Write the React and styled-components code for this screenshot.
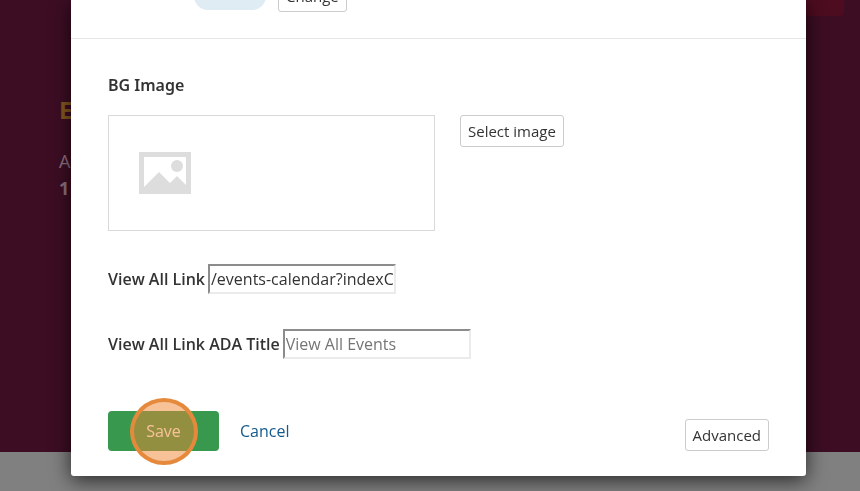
import React from 'react';
import styled, { createGlobalStyle } from 'styled-components';

const GlobalStyle = createGlobalStyle`
    * {
        box-sizing: border-box;
    }

    body {
        margin: 0;
        font-family: 'Open Sans', 'Noto Sans', sans-serif;
        font-size: 16px;
        line-height: 24px;
        color: #333;
    }

    button, input {
        font: inherit;
    }
`;

const Page = styled.div`
    display: flex;
    flex-direction: column;
    height: 100vh;
    overflow: hidden;
    background: #808080;
`;

const Hero = styled.section`
    position: relative;
    flex: 1;
    margin-bottom: 39px;
    padding: 96px 59px 0;
    background: #3d0d24;
    color: #8f7483;
`;

const HeroBadge = styled.div`
    position: absolute;
    top: 0;
    right: 16px;
    width: 120px;
    height: 16px;
    border-radius: 0 0 4px 4px;
    background: #4d0c1f;
`;

const HeroTitle = styled.h2`
    margin: 0 0 24px;
    font-size: 24px;
    line-height: 28px;
    color: #85591f;
`;

const HeroText = styled.p`
    margin: 0;
    font-size: 18px;
    line-height: 27px;
    font-weight: ${props => props.$bold ? 700 : 400};
`;

const Overlay = styled.div`
    position: fixed;
    inset: 0;
    padding: 0 54px 15px 71px;
`;

const Dialog = styled.form`
    background: #fff;
    border-radius: 0 0 3px 3px;
    box-shadow: 0 4px 20px rgba(0, 0, 0, 0.7);
`;

const DialogHeader = styled.header`
    display: flex;
    align-items: flex-end;
    height: 39px;
    padding: 0 36px 26px 123px;
    border-bottom: 1px solid #e6e6e6;
`;

const ChipRow = styled.div`
    display: flex;
    align-items: center;
    gap: 12px;
`;

const Chip = styled.span`
    width: 72px;
    height: 28px;
    border-radius: 14px;
    background: #dfecf4;
`;

const DialogBody = styled.div`
    padding: 34px 37px 0;
`;

const SectionTitle = styled.h3`
    margin: 0 0 18px;
    font-family: 'Noto Sans', sans-serif;
    font-size: 16px;
    font-weight: 600;
`;

const ImageRow = styled.div`
    display: flex;
    align-items: flex-start;
    gap: 25px;
    margin-bottom: 33px;
`;

const ImageBox = styled.div`
    display: flex;
    align-items: center;
    width: 327px;
    height: 116px;
    padding-left: 30px;
    border: 1px solid #d9d9d9;
`;

const OutlineButton = styled.button`
    height: 32px;
    padding: 0 7px;
    border: 1px solid #ccc;
    border-radius: 3px;
    background: #fff;
    color: #333;
    font-size: 15px;
`;

const Field = styled.div`
    display: flex;
    align-items: center;
    gap: 3px;
    margin-bottom: 35px;
`;

const Label = styled.label`
    font-weight: 600;
`;

const TextInput = styled.input`
    width: 188px;
    height: 30px;
    padding: 1px;
    border: 2px solid;
    border-color: #8c8c8c #ebebeb #ebebeb #8c8c8c;
    background: #fff;
    color: #333;

    &::placeholder {
        color: #757575;
        opacity: 1;
    }
`;

const DialogFooter = styled.footer`
    display: flex;
    align-items: center;
    padding: 17px 37px 25px;
`;

const SaveSlot = styled.div`
    position: relative;
`;

const SaveButton = styled.button`
    display: block;
    width: 111px;
    height: 40px;
    padding: 0;
    border: 0;
    border-radius: 4px;
    background: #37984e;
    color: #fff;
`;

const ClickMarker = styled.span`
    position: absolute;
    top: -13px;
    left: 22px;
    width: 68px;
    height: 67px;
    border: 4px solid #e58a3c;
    border-radius: 50%;
    background: rgba(240, 134, 50, 0.5);
    pointer-events: none;
`;

const CancelLink = styled.a`
    margin-left: 21px;
    color: #145a8c;
    text-decoration: none;
`;

const AdvancedButton = styled(OutlineButton)`
    margin: 8px 0 0 auto;
`;

const PlaceholderIcon = () => (
    <svg width="52" height="42" viewBox="0 0 52 42" aria-hidden="true">
        <path fill="#ddd" fillRule="evenodd" d="M0 0H52V42H0ZM5 5V35L20 20L31 31L38 24L47 33V5Z" />
        <circle cx="38" cy="14" r="6" fill="#ddd" />
    </svg>
);

const App = () => {
    return (
        <>
            <GlobalStyle />
            <Page>
                <Hero>
                    <HeroBadge />
                    <HeroTitle>E</HeroTitle>
                    <HeroText>A</HeroText>
                    <HeroText $bold>1</HeroText>
                </Hero>
            </Page>
            <Overlay>
                <Dialog>
                    <DialogHeader>
                        <ChipRow>
                            <Chip />
                            <OutlineButton type="button">Change</OutlineButton>
                        </ChipRow>
                    </DialogHeader>
                    <DialogBody>
                        <SectionTitle>BG Image</SectionTitle>
                        <ImageRow>
                            <ImageBox>
                                <PlaceholderIcon />
                            </ImageBox>
                            <OutlineButton type="button">Select image</OutlineButton>
                        </ImageRow>
                        <Field>
                            <Label htmlFor="view-all-link">View All Link</Label>
                            <TextInput id="view-all-link" type="text" defaultValue="/events-calendar?indexCatalogue=events" />
                        </Field>
                        <Field>
                            <Label htmlFor="view-all-title">View All Link ADA Title</Label>
                            <TextInput id="view-all-title" type="text" placeholder="View All Events" />
                        </Field>
                    </DialogBody>
                    <DialogFooter>
                        <SaveSlot>
                            <SaveButton type="button">Save</SaveButton>
                            <ClickMarker />
                        </SaveSlot>
                        <CancelLink href="#cancel">Cancel</CancelLink>
                        <AdvancedButton type="button">Advanced</AdvancedButton>
                    </DialogFooter>
                </Dialog>
            </Overlay>
        </>
    );
};

export default App;
